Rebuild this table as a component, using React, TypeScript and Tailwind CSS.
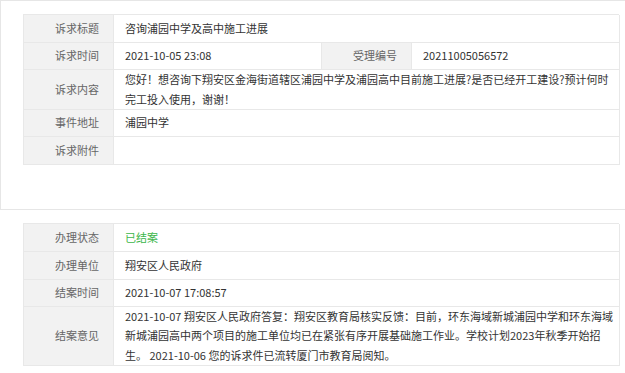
import type { ReactNode } from "react";

const font = { fontFamily: '"Noto Sans CJK SC", "Noto Sans", sans-serif' };

function Label({ children }: { children: ReactNode }) {
  return (
    <div className="flex items-center justify-end bg-[#f2f2f2] pr-[14px] text-[#666] border-r border-b border-[#e8e8e8]">
      {children}
    </div>
  );
}

function Value({ children, span, green }: { children?: ReactNode; span?: boolean; green?: boolean }) {
  return (
    <div
      className={`flex flex-col justify-center pl-[11px] border-r border-b border-[#e8e8e8] ${
        span ? "col-span-3" : ""
      } ${green ? "text-[#3cb64a]" : "text-[#333]"}`}
    >
      {children}
    </div>
  );
}

export default function App() {
  return (
    <div className="w-[625px] h-[373px] overflow-hidden bg-white text-[11px]" style={font}>
      {/* 诉求信息 */}
      <div className="h-[209px] border-t border-l border-[#e6e6e6] pt-[13px] pl-[22px]">
        <div className="grid w-[596px] grid-cols-[90px_208px_90px_208px] grid-rows-[28px_27px_40px_27px_28px] border-t border-l border-[#e8e8e8] leading-[19.5px]">
          <Label>诉求标题</Label>
          <Value span>咨询浦园中学及高中施工进展</Value>

          <Label>诉求时间</Label>
          <Value>2021-10-05 23:08</Value>
          <Label>受理编号</Label>
          <Value>20211005056572</Value>

          <Label>诉求内容</Label>
          <Value span>
            <span className="whitespace-nowrap">
              您好！想咨询下翔安区金海街道辖区浦园中学及浦园高中目前施工进展?是否已经开工建设?预计何时
            </span>
            <span className="whitespace-nowrap">完工投入使用，谢谢！</span>
          </Value>

          <Label>事件地址</Label>
          <Value span>浦园中学</Value>

          <Label>诉求附件</Label>
          <Value span />
        </div>
      </div>

      {/* 办理信息 */}
      <div className="border-t border-[#e6e6e6] pt-[13px] pl-[23px]">
        <div className="grid w-[596px] grid-cols-[90px_506px] grid-rows-[28px_28px_27px_59px] border-t border-l border-[#e8e8e8] leading-[19.4px]">
          <Label>办理状态</Label>
          <Value green>已结案</Value>

          <Label>办理单位</Label>
          <Value>翔安区人民政府</Value>

          <Label>结案时间</Label>
          <Value>2021-10-07 17:08:57</Value>

          <Label>结案意见</Label>
          <Value>
            <span className="whitespace-nowrap">
              2021-10-07 翔安区人民政府答复：翔安区教育局核实反馈：目前，环东海域新城浦园中学和环东海域
            </span>
            <span className="whitespace-nowrap">
              新城浦园高中两个项目的施工单位均已在紧张有序开展基础施工作业。学校计划2023年秋季开始招
            </span>
            <span className="whitespace-nowrap">生。 2021-10-06 您的诉求件已流转厦门市教育局阅知。</span>
          </Value>
        </div>
      </div>
    </div>
  );
}
